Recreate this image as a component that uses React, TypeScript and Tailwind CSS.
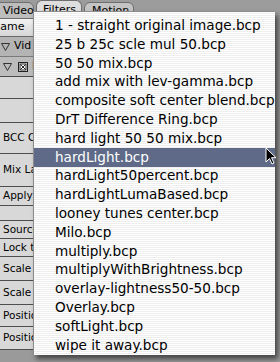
import React from 'react';

const presets = [
  '1 - straight original image.bcp',
  '25 b 25c scle mul 50.bcp',
  '50 50 mix.bcp',
  'add mix with lev-gamma.bcp',
  'composite soft center blend.bcp',
  'DrT Difference Ring.bcp',
  'hard light 50 50 mix.bcp',
  'hardLight.bcp',
  'hardLight50percent.bcp',
  'hardLightLumaBased.bcp',
  'looney tunes center.bcp',
  'Milo.bcp',
  'multiply.bcp',
  'multiplyWithBrightness.bcp',
  'overlay-lightness50-50.bcp',
  'Overlay.bcp',
  'softLight.bcp',
  'wipe it away.bcp',
];

// parameter rows behind the menu: label + row height in px
const params = [
  { label: '', h: 22 },
  { label: '', h: 24 },
  { label: 'BCC Co', h: 31 },
  { label: 'Mix Lay', h: 33 },
  { label: 'Apply C', h: 19 },
  { label: '', h: 15 },
  { label: 'Source', h: 18 },
  { label: 'Lock to', h: 18 },
  { label: 'Scale X', h: 24 },
  { label: 'Scale Y', h: 24 },
  { label: 'Positio', h: 22 },
  { label: 'Positio', h: 23 },
];

const SELECTED = 7;

export default function App() {
  return (
    <div className="relative w-[280px] h-[362px] overflow-hidden bg-[#9a9a9a] font-['DejaVu_Sans',sans-serif] text-black">
      {/* Viewer window behind the menu */}
      <div className="flex flex-col">
        {/* Tabs */}
        <div className="flex h-[19px] items-end gap-[2px] bg-[#9c9c9c] text-[11px] leading-none">
          <div className="-ml-[6px] h-[17px] w-[40px] shrink-0 rounded-tr-[6px] border border-[#6e6e6e] bg-[#bdbdbd] pl-[8px] pt-[2px]">
            Video
          </div>
          <div className="h-[19px] w-[46px] shrink-0 rounded-t-[6px] border border-b-0 border-[#6e6e6e] bg-[#dedede] pl-[6px] pt-[3px]">
            Filters
          </div>
          <div className="h-[17px] w-[50px] shrink-0 rounded-t-[6px] border border-[#6e6e6e] bg-[#c4c4c4] pl-[7px] pt-[2px]">
            Motion
          </div>
        </div>

        {/* Column header */}
        <div className="flex h-[18px] w-[33px] items-center overflow-hidden border-b border-[#6a6a6a] bg-[linear-gradient(#f2f2f2,#d6d6d6)] text-[11px]">
          <span className="-ml-[8px]">Name</span>
        </div>

        {/* Group rows */}
        <div className="flex h-[20px] w-[33px] items-center gap-[4px] overflow-hidden border-b border-[#7a7a7a] bg-[#b4b4b4] text-[11px]">
          <svg width="9" height="8" viewBox="0 0 9 8" className="ml-[1px] shrink-0">
            <path d="M0.5 0.5 H8.5 L4.5 7.5 Z" fill="none" stroke="#333" />
          </svg>
          <span>Vid</span>
        </div>
        <div className="flex h-[20px] w-[33px] items-center gap-[4px] overflow-hidden border-b border-[#4a4a4a] bg-[#bcbcbc] text-[11px]">
          <svg width="9" height="8" viewBox="0 0 9 8" className="ml-[3px] shrink-0">
            <path d="M0.5 0.5 H8.5 L4.5 7.5 Z" fill="none" stroke="#333" />
          </svg>
          <svg width="10" height="10" viewBox="0 0 10 10" className="ml-[2px] shrink-0">
            <rect x="0.5" y="0.5" width="9" height="9" fill="#fff" stroke="#222" />
            <rect x="2" y="2" width="6" height="6" fill="none" stroke="#222" />
            <path d="M2.5 2.5 L7.5 7.5 M7.5 2.5 L2.5 7.5" stroke="#222" />
          </svg>
          <span>B</span>
        </div>

        {/* Parameter rows */}
        {params.map((p, i) => (
          <div
            key={i}
            style={{ height: p.h }}
            className="flex w-[33px] items-center overflow-hidden whitespace-nowrap border-b border-[#4e4e4e] bg-[#d8d8d8] pl-[3px] text-[10.5px]"
          >
            {p.label}
          </div>
        ))}
      </div>

      {/* Preset pop-up menu */}
      <div className="absolute left-[33px] top-[11px] h-[344px] w-[242px] overflow-hidden border-l border-t border-[#8c8c8c] bg-[image:repeating-linear-gradient(to_bottom,#ffffff_0px,#ffffff_1px,#eeeeee_1px,#eeeeee_2px)] pt-[4.4px] shadow-[3px_4px_5px_rgba(0,0,0,0.55)]">
        {presets.map((name, i) => (
          <div
            key={name}
            className={`flex h-[18.8px] items-center whitespace-nowrap pl-[21px] text-[13.6px] leading-none ${
              i === SELECTED ? 'bg-[#5e6a87] text-white' : ''
            }`}
          >
            {name}
          </div>
        ))}
      </div>

      {/* Mouse pointer */}
      <svg
        className="absolute left-[265px] top-[147px]"
        width="12"
        height="19"
        viewBox="0 0 12 19"
      >
        <path
          d="M1 1 L1 15 L4.5 11.5 L7 17 L9 16 L6.5 10.7 L11 10.7 Z"
          fill="#000"
          stroke="#fff"
          strokeWidth="1"
          strokeLinejoin="round"
        />
      </svg>
    </div>
  );
}
